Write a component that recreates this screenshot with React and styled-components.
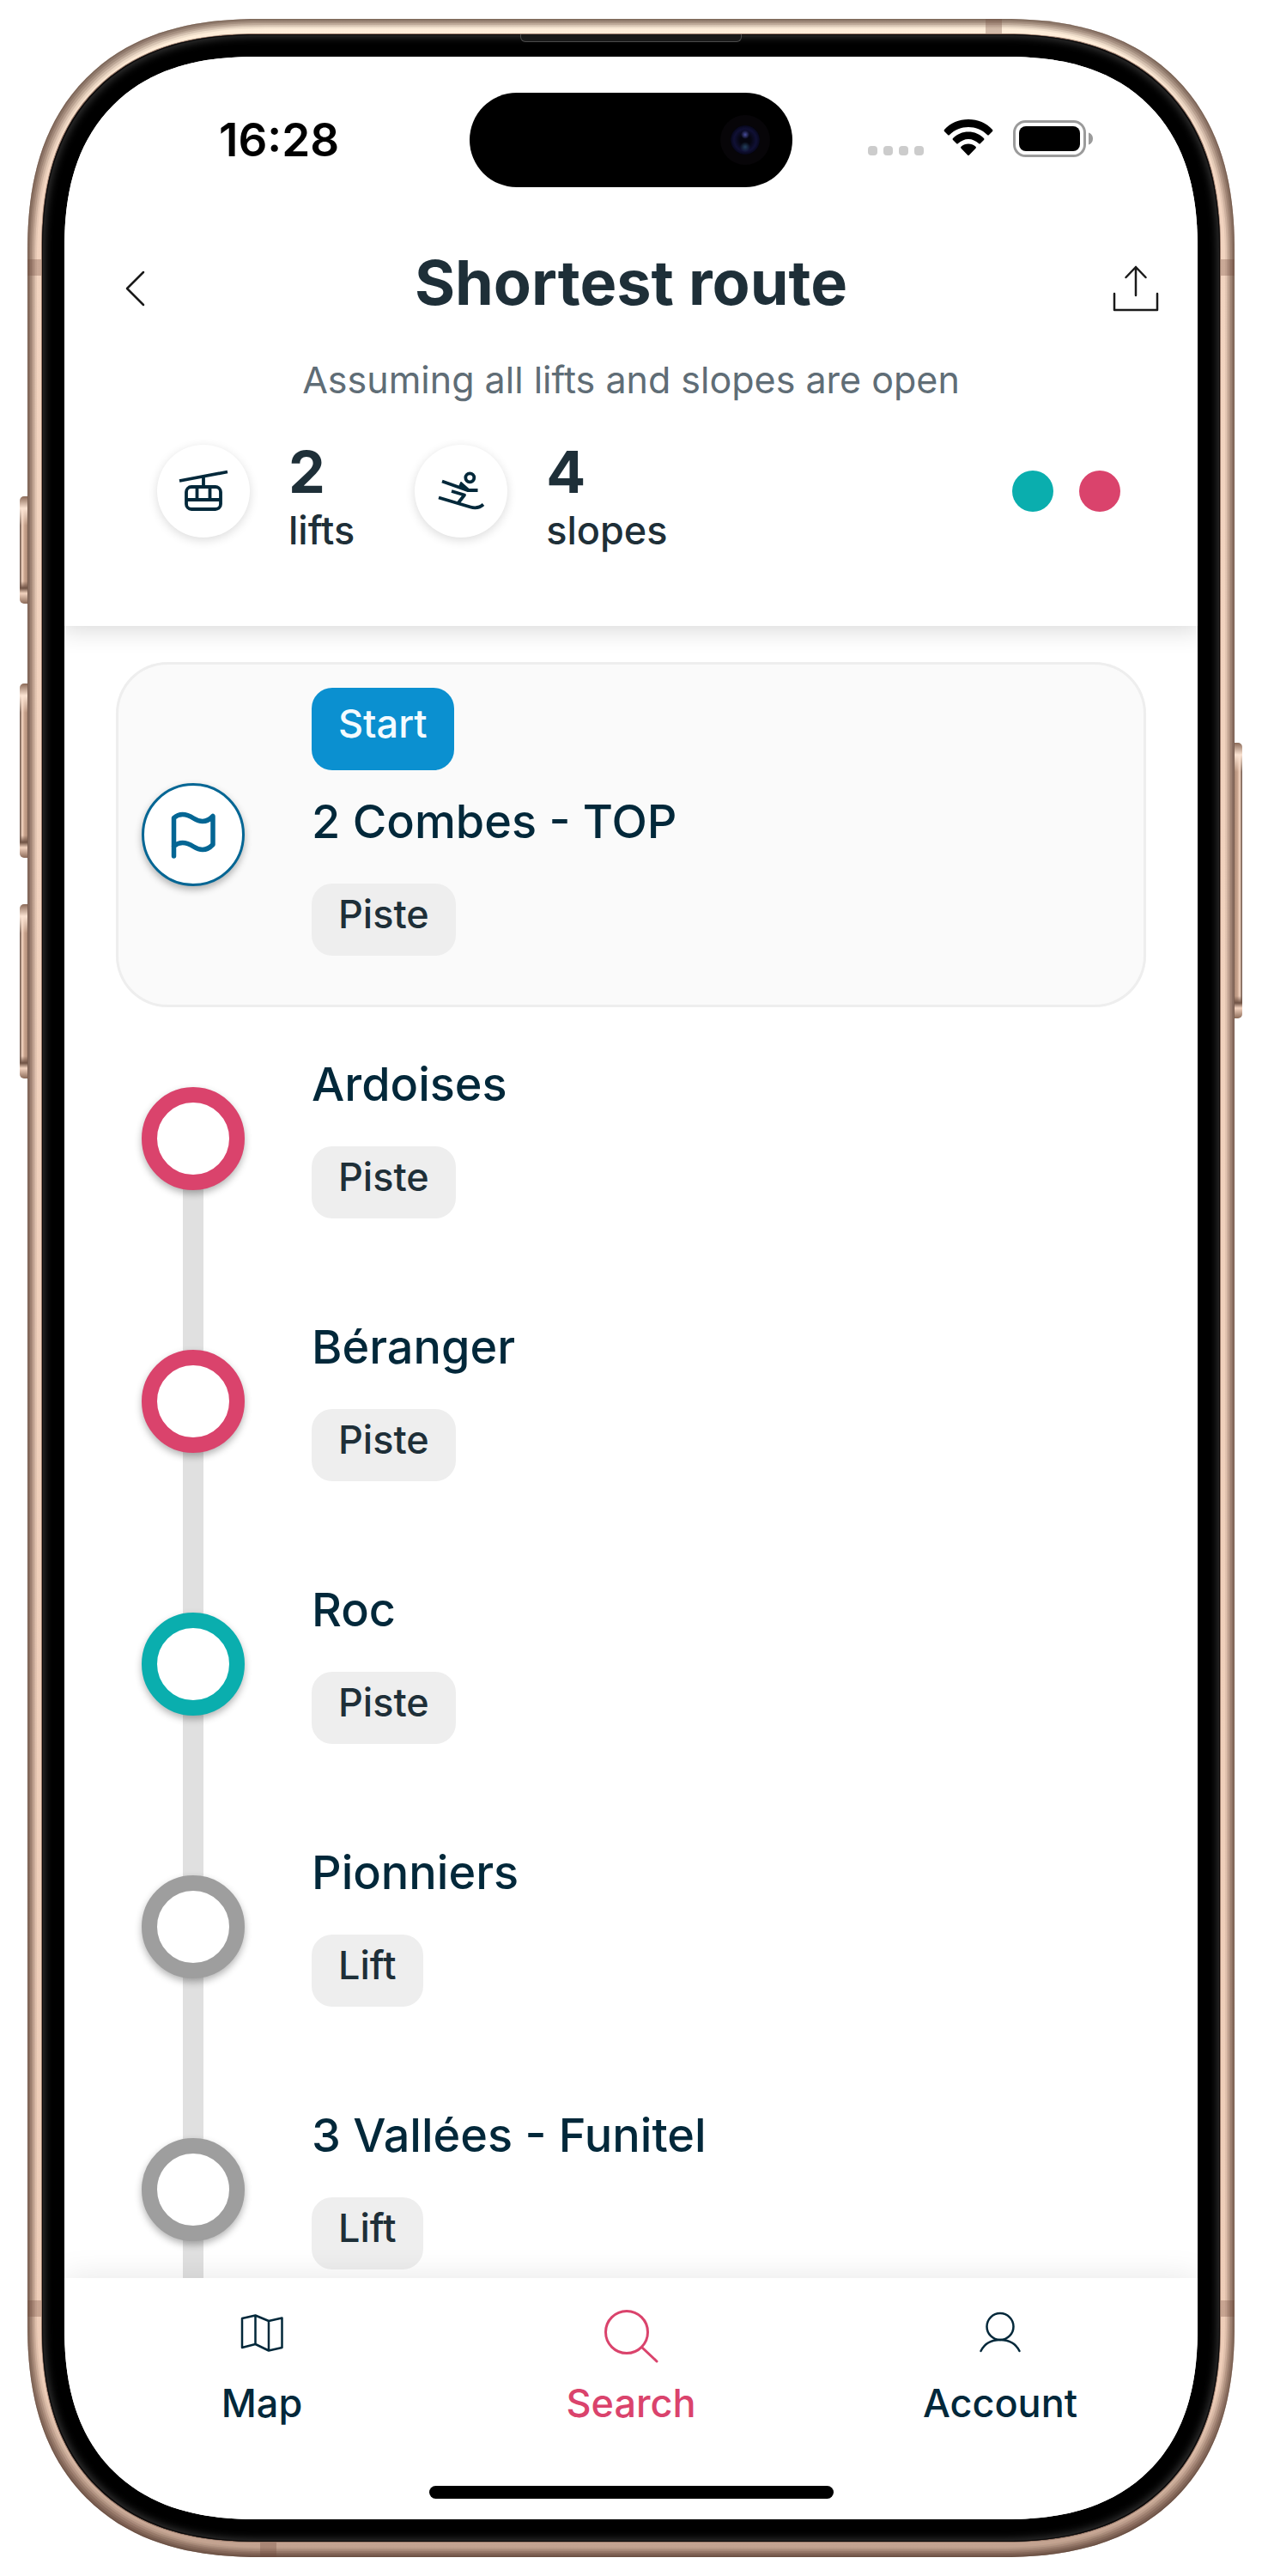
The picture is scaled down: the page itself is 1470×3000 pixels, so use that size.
import React from "react";
import styled, { createGlobalStyle, css } from "styled-components";

const color = {
  ink: "#02283a",
  text: "#1e2f38",
  muted: "#5f6d76",
  pink: "#da436c",
  teal: "#0aaeae",
  grey: "#9e9e9e",
  blue: "#0b90d0",
  deepBlue: "#046694",
};

const GlobalStyle = createGlobalStyle`
  *, *::before, *::after { box-sizing: border-box; }
  body {
    margin: 0;
    background: #fff;
    font-family: Inter, "Open Sans", sans-serif;
    color: ${color.text};
  }
  h1, h2, p, ol, ul { margin: 0; padding: 0; }
  ol, ul { list-style: none; }
`;

/* ---------- device ---------- */

/* Continuous corners where the browser has them, plain round ones elsewhere. */
const deviceCorner = (round, continuous) => css`
  border-radius: ${round}px;

  @supports (corner-shape: superellipse(1.25)) {
    border-radius: ${continuous}px;
    corner-shape: superellipse(1.25);
  }
`;

const Page = styled.div`
  display: flex;
  height: 100vh;
  min-height: 1600px;
  padding: 22px 32px;
`;

const Frame = styled.div`
  position: relative;
  display: flex;
  flex: 1;
  min-width: 0;
  padding: 18px 17px;
  ${deviceCorner(236, 272)}
  background: linear-gradient(#ffefdb, #f2d4c0 200px, #eecdb8 calc(100% - 200px), #bf9f8d);
  box-shadow:
    inset 0 0 0 1px rgba(70, 46, 36, 0.26),
    inset 0 0 0 3px rgba(70, 46, 36, 0.22),
    inset 0 0 0 5px rgba(70, 46, 36, 0.2),
    inset 0 0 0 7px rgba(70, 46, 36, 0.18),
    inset 0 0 0 9px rgba(70, 46, 36, 0.14),
    inset 0 0 0 11px rgba(70, 46, 36, 0.08);
`;

const Bezel = styled.div`
  position: relative;
  display: flex;
  flex: 1;
  min-width: 0;
  padding: 26px;
  ${deviceCorner(219, 252)}
  background: #000;
  box-shadow:
    0 0 0 1px #9a7b6b,
    inset 0 0 0 1px #0a0808,
    inset 0 0 10px 3px #343434;
`;

const Screen = styled.div`
  display: flex;
  flex-direction: column;
  flex: 1;
  min-width: 0;
  overflow: hidden;
  ${deviceCorner(194, 224)}
  background: #fff;
`;

const SideKey = styled.span`
  position: absolute;
  top: ${(p) => p.$top}px;
  ${(p) => p.$side}: -9px;
  width: 9px;
  height: ${(p) => p.$height}px;
  border-radius: ${(p) => (p.$side === "left" ? "5px 0 0 5px" : "0 5px 5px 0")};
  background:
    linear-gradient(
      #8b6a58, #fbe3d2 14px, transparent 34px,
      transparent calc(100% - 26px), #6f5244 calc(100% - 18px),
      #f3d3bf calc(100% - 12px), #8b6a58
    ),
    linear-gradient(
      to ${(p) => p.$side},
      #b08d78, #cda892 4px, #fbdcc8 6px, #5d473c
    );
`;

const Band = styled.span`
  position: absolute;
  background: rgba(110, 70, 55, 0.3);
  ${(p) => p.$edge}: 0;
  ${(p) =>
    p.$edge === "left" || p.$edge === "right"
      ? `width: 17px; height: 19px; ${p.$from}: 280px;`
      : `height: 18px; width: 19px; ${p.$from}: 271px;`}
`;

const Earpiece = styled.span`
  position: absolute;
  top: 0;
  left: 50%;
  width: 258px;
  height: 9px;
  margin-left: -129px;
  border: 1px solid #4a4a4a;
  border-top: 0;
  border-radius: 0 0 6px 6px;
  background: #191919;
`;

/* ---------- status bar ---------- */

const StatusBar = styled.div`
  display: grid;
  grid-template-columns: 1fr 376px 1fr;
  align-items: center;
  padding-top: 42px;
`;

const Clock = styled.time`
  padding-left: 180px;
  font-size: 53px;
  line-height: 60px;
  font-weight: 600;
  color: #000;
`;

const Island = styled.div`
  display: flex;
  align-items: center;
  justify-content: flex-end;
  height: 110px;
  padding-right: 38px;
  border-radius: 55px;
  background: #000;
`;

const Lens = styled.span`
  width: 34px;
  height: 34px;
  border-radius: 50%;
  background:
    radial-gradient(circle at 50% 32%, #4a4fa0 0, transparent 5px),
    radial-gradient(circle at 50% 74%, #24405e 0, transparent 6px),
    radial-gradient(circle, #05050f 6px, #101035 13px, #07071a 17px);
  box-shadow: 0 0 0 12px #070508;
`;

const Indicators = styled.div`
  display: flex;
  align-items: center;
  justify-content: flex-end;
  gap: 23px;
  padding: 0 122px 4px 0;
`;

const SignalDots = styled.div`
  display: flex;
  align-self: flex-end;
  gap: 7px;
  padding-bottom: 2px;

  span {
    width: 11px;
    height: 11px;
    border-radius: 4px;
    background: #ccc;
  }
`;

/* ---------- header ---------- */

const Header = styled.header`
  position: relative;
  flex: none;
  padding-bottom: 81px;
  background: #fff;
  box-shadow: 0 0 28px 4px rgba(0, 0, 0, 0.16);
`;

const TitleBar = styled.div`
  display: grid;
  grid-template-columns: 80px 1fr 80px;
  align-items: center;
  margin-top: 72px;
  padding: 0 42px;
`;

const IconButton = styled.button`
  display: flex;
  align-items: center;
  justify-content: ${(p) => (p.$end ? "flex-end" : "flex-start")};
  height: 60px;
  padding: ${(p) => (p.$end ? "0 3px 0 0" : "0 0 0 29px")};
  border: 0;
  background: none;
  color: #1a1a1a;
`;

const Title = styled.h1`
  padding-bottom: 14px;
  font-size: 72px;
  line-height: 78px;
  font-weight: 700;
  text-align: center;
`;

const Subtitle = styled.p`
  margin-top: 30px;
  font-size: 43px;
  line-height: 60px;
  color: ${color.muted};
  text-align: center;
`;

const Summary = styled.div`
  display: flex;
  align-items: flex-start;
  gap: 70px;
  margin-top: 38px;
  padding: 0 90px 0 108px;
`;

const Stat = styled.div`
  display: flex;
  gap: 45px;
`;

const StatIcon = styled.span`
  display: grid;
  place-items: center;
  width: 108px;
  height: 108px;
  margin-top: 8px;
  border-radius: 50%;
  background: #fff;
  box-shadow: 0 3px 12px rgba(0, 0, 0, 0.14);
  color: ${color.ink};
`;

const StatText = styled.div`
  display: flex;
  flex-direction: column;
`;

const StatValue = styled.strong`
  font-size: 68px;
  line-height: 78px;
  font-weight: 700;
`;

const StatLabel = styled.span`
  font-size: 45px;
  line-height: 60px;
  font-weight: 500;
`;

const Levels = styled.div`
  display: flex;
  gap: 30px;
  margin: 38px 0 0 auto;
`;

const LevelDot = styled.span`
  width: 48px;
  height: 48px;
  border-radius: 50%;
  background: ${(p) => p.$color};
`;

/* ---------- route ---------- */

const Route = styled.ol`
  flex: 1;
  min-height: 0;
  overflow: hidden;
  padding: 42px 60px 0;
`;

const Stop = styled.li`
  display: flex;
  gap: 78px;
  padding-left: 30px;
  border-radius: 60px;
  background: ${(p) => (p.$start ? "#fafafa" : "none")};
  box-shadow: ${(p) => (p.$start ? "inset 0 0 0 3px #eee" : "none")};
`;

const Rail = styled.div`
  display: grid;
  place-items: center;
  flex: none;
  width: 120px;
  background: ${(p) =>
    p.$line === "none"
      ? "none"
      : `linear-gradient(#e0e0e0, #e0e0e0) bottom / 24px ${p.$line === "half" ? "50%" : "100%"} no-repeat`};
`;

const Marker = styled.span`
  display: grid;
  place-items: center;
  width: 120px;
  height: 120px;
  border: ${(p) => p.$width}px solid ${(p) => p.$color};
  border-radius: 50%;
  background: #fff;
  box-shadow: 0 4px 9px rgba(0, 0, 0, 0.3);
  color: ${(p) => p.$color};
`;

const StopBody = styled.div`
  display: flex;
  flex-direction: column;
  align-items: flex-start;
  padding: ${(p) => (p.$start ? 30 : 60)}px 0 60px;
`;

const StopName = styled.h2`
  margin-bottom: 42px;
  font-size: 54px;
  line-height: 60px;
  font-weight: 500;
  color: ${color.ink};
`;

const Tag = styled.span`
  padding: 6px 31px 18px;
  border-radius: 24px;
  background: #eee;
  font-size: 45px;
  line-height: 60px;
  font-weight: 500;
`;

const StartTag = styled(Tag)`
  margin-bottom: 30px;
  padding: 12px 31px 24px;
  background: ${color.blue};
  color: #f4fbff;
`;

/* ---------- tab bar ---------- */

const TabBar = styled.nav`
  position: relative;
  flex: none;
  padding: 30px 15px 24px;
  background: #fff;
  box-shadow: 0 0 36px rgba(0, 0, 0, 0.1);
`;

const Tabs = styled.ul`
  display: grid;
  grid-template-columns: repeat(3, 1fr);
`;

const TabLink = styled.a`
  display: flex;
  flex-direction: column;
  align-items: center;
  gap: 20px;
  color: ${(p) => (p.$active ? color.pink : color.ink)};
  font-size: 45px;
  line-height: 60px;
  font-weight: 500;
  text-decoration: none;

  svg {
    display: block;
    overflow: visible;
  }
`;

const HomeIndicator = styled.div`
  width: 471px;
  height: 15px;
  margin: 66px auto 0;
  border-radius: 8px;
  background: #000;
`;

/* ---------- icons ---------- */

const stroke = {
  fill: "none",
  stroke: "currentColor",
  strokeLinecap: "round",
  strokeLinejoin: "round",
  "aria-hidden": true,
};

const WifiIcon = () => (
  <svg width="58" height="44" viewBox="0 0 58 44" aria-hidden="true">
    <path d="M29 0C18 0 8 4 1 12q-1 1 0 2l4 4q1 1 2 0C13 12 21 9 29 9s16 3 22 9q1 1 2 0l4-4q1-1 0-2C50 4 40 0 29 0Z" />
    <path d="M29 14.500c-7 0-13 2.600-18 7.500q-1 1 0 2l4 4q1 1 2 0c3.500-3 7.500-5 12-5s8.500 2 12 5q1 1 2 0l4-4q1-1 0-2c-5-4.900-11-7.500-18-7.500Z" />
    <path d="M29 28.500c-3 0-6 1.200-8.500 3.200q-1 1 0 2l7.500 7.800q1 1 2 0l7.500-7.800q1-1 0-2C35 29.700 32 28.500 29 28.500Z" />
  </svg>
);

const BatteryIcon = () => (
  <svg width="93" height="43" viewBox="0 0 93 43" aria-hidden="true">
    <rect x="1.500" y="1.500" width="82" height="40" rx="13" fill="none" stroke="#9b9b9b" strokeWidth="3" />
    <rect x="7" y="7" width="71" height="29" rx="8" />
    <path d="M88 14.500c3.500 1.200 5 3.800 5 7s-1.500 5.800-5 7Z" fill="#9b9b9b" />
  </svg>
);

const BackIcon = () => (
  <svg width="24" height="42" viewBox="0 0 24 42" {...stroke} strokeWidth="2.500">
    <path d="M21 2 2 21l19 19" />
  </svg>
);

const ShareIcon = () => (
  <svg width="54" height="54" viewBox="0 0 54 54" {...stroke} strokeWidth="2.500">
    <path d="M27 35V2M15.500 14 27 2l11.500 12M2 33v19h50V33" />
  </svg>
);

const GondolaIcon = () => (
  <svg width="60" height="54" viewBox="0 0 60 54" {...stroke} strokeLinecap="butt" strokeWidth="3.800">
    <path d="m2 15 56-10.500M30 10v12" />
    <rect x="10" y="22" width="40" height="26" rx="6" />
    <path d="M10 37h40M22.500 22v15M37.500 22v15" />
  </svg>
);

const SkierIcon = () => (
  <svg width="60" height="54" viewBox="0 0 60 54" {...stroke} strokeLinecap="butt" strokeWidth="3.800">
    <circle cx="40.300" cy="11.300" r="5" />
    <path d="m8 15.500 29.500 10.500h12M19 27l15 4.500-7.500 9.500M4 34.500 41 45.500q9 2.500 15-3" />
    <path d="m30 17 9 8-11-3Z" fill="currentColor" strokeWidth="2" />
  </svg>
);

const FlagIcon = () => (
  <svg width="54" height="56" viewBox="0 0 54 56" {...stroke} strokeWidth="5.500">
    <path d="M4.500 53V8.500c8-7 16-4 23 .5s15 5.500 22.500-2.500v33c-7.500 8-15.500 7-22.500 2.500s-15-7.500-23-.500" />
  </svg>
);

const MapIcon = () => (
  <svg width="66" height="66" viewBox="0 0 66 66" {...stroke} strokeWidth="2.500">
    <path d="M10 17 25.500 13.500 41 20l15.500-3.500V51L41 54.500 25.500 47 10 51ZM25.500 13.500V47M41 20v34.500" />
  </svg>
);

const SearchIcon = () => (
  <svg width="66" height="66" viewBox="0 0 66 66" {...stroke} strokeWidth="3">
    <circle cx="28" cy="33" r="24.500" />
    <path d="m46 51 17 16" />
  </svg>
);

const AccountIcon = () => (
  <svg width="66" height="66" viewBox="0 0 66 66" {...stroke} strokeWidth="2.500">
    <circle cx="33" cy="26.500" r="15.500" />
    <path d="M10.500 55c4.500-9 13-13 22.500-13s18 4 22.500 13" />
  </svg>
);

/* ---------- data ---------- */

const stats = [
  { value: 2, label: "lifts", icon: <GondolaIcon /> },
  { value: 4, label: "slopes", icon: <SkierIcon /> },
];

const stops = [
  { name: "Ardoises", kind: "Piste", color: color.pink },
  { name: "Béranger", kind: "Piste", color: color.pink },
  { name: "Roc", kind: "Piste", color: color.teal },
  { name: "Pionniers", kind: "Lift", color: color.grey },
  { name: "3 Vallées - Funitel", kind: "Lift", color: color.grey },
];

const tabs = [
  { name: "Map", href: "#map", icon: <MapIcon /> },
  { name: "Search", href: "#search", icon: <SearchIcon />, active: true },
  { name: "Account", href: "#account", icon: <AccountIcon /> },
];

export default function App() {
  return (
    <>
      <GlobalStyle />
      <Page>
        <Frame>
          <SideKey $side="left" $top={556} $height={125} />
          <SideKey $side="left" $top={774} $height={203} />
          <SideKey $side="left" $top={1031} $height={203} />
          <SideKey $side="right" $top={843} $height={321} />
          <Band $edge="left" $from="top" />
          <Band $edge="right" $from="top" />
          <Band $edge="left" $from="bottom" />
          <Band $edge="right" $from="bottom" />
          <Band $edge="top" $from="right" />
          <Band $edge="bottom" $from="left" />
          <Bezel>
            <Earpiece />
            <Screen>
              <Header>
                <StatusBar>
                  <Clock>16:28</Clock>
                  <Island>
                    <Lens />
                  </Island>
                  <Indicators>
                    <SignalDots>
                      <span />
                      <span />
                      <span />
                      <span />
                    </SignalDots>
                    <WifiIcon />
                    <BatteryIcon />
                  </Indicators>
                </StatusBar>
                <TitleBar>
                  <IconButton type="button" aria-label="Back">
                    <BackIcon />
                  </IconButton>
                  <Title>Shortest route</Title>
                  <IconButton type="button" aria-label="Share" $end>
                    <ShareIcon />
                  </IconButton>
                </TitleBar>
                <Subtitle>Assuming all lifts and slopes are open</Subtitle>
                <Summary>
                  {stats.map((s) => (
                    <Stat key={s.label}>
                      <StatIcon>{s.icon}</StatIcon>
                      <StatText>
                        <StatValue>{s.value}</StatValue>
                        <StatLabel>{s.label}</StatLabel>
                      </StatText>
                    </Stat>
                  ))}
                  <Levels>
                    <LevelDot $color={color.teal} />
                    <LevelDot $color={color.pink} />
                  </Levels>
                </Summary>
              </Header>
              <Route>
                <Stop $start>
                  <Rail $line="none">
                    <Marker $width={3} $color={color.deepBlue}>
                      <FlagIcon />
                    </Marker>
                  </Rail>
                  <StopBody $start>
                    <StartTag>Start</StartTag>
                    <StopName>2 Combes - TOP</StopName>
                    <Tag>Piste</Tag>
                  </StopBody>
                </Stop>
                {stops.map((s, i) => (
                  <Stop key={s.name}>
                    <Rail $line={i === 0 ? "half" : "full"}>
                      <Marker $width={18} $color={s.color} />
                    </Rail>
                    <StopBody>
                      <StopName>{s.name}</StopName>
                      <Tag>{s.kind}</Tag>
                    </StopBody>
                  </Stop>
                ))}
              </Route>
              <TabBar aria-label="Main">
                <Tabs>
                  {tabs.map((t) => (
                    <li key={t.name}>
                      <TabLink href={t.href} $active={t.active} aria-current={t.active ? "page" : undefined}>
                        {t.icon}
                        {t.name}
                      </TabLink>
                    </li>
                  ))}
                </Tabs>
                <HomeIndicator />
              </TabBar>
            </Screen>
          </Bezel>
        </Frame>
      </Page>
    </>
  );
}
